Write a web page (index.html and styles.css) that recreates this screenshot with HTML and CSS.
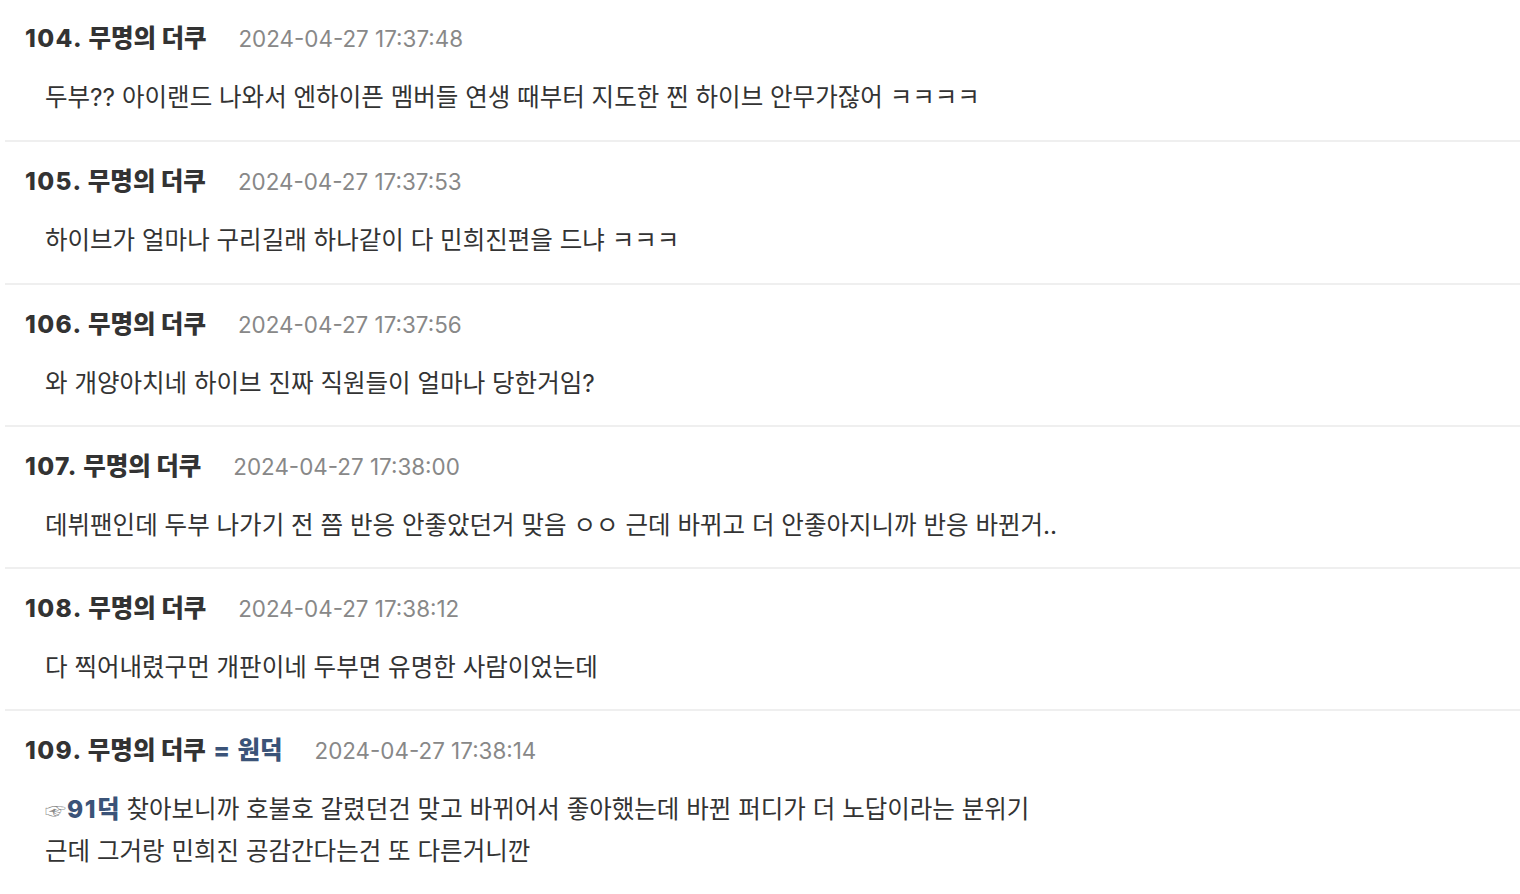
FILE: index.html
```html
<!DOCTYPE html>
<html lang="ko">
<head>
<meta charset="utf-8">
<link rel="stylesheet" href="styles.css">
</head>
<body>
<div class="list">
  <div class="item first">
    <div class="head"><span class="name"><span class="num">104.</span> 무명의 더쿠</span><span class="time">2024-04-27 17:37:48</span></div>
    <div class="body">두부?? 아이랜드 나와서 엔하이픈 멤버들 연생 때부터 지도한 찐 하이브 안무가잖어 ㅋㅋㅋㅋ</div>
  </div>
  <div class="item">
    <div class="head"><span class="name"><span class="num">105.</span> 무명의 더쿠</span><span class="time">2024-04-27 17:37:53</span></div>
    <div class="body">하이브가 얼마나 구리길래 하나같이 다 민희진편을 드냐 ㅋㅋㅋ</div>
  </div>
  <div class="item">
    <div class="head"><span class="name"><span class="num">106.</span> 무명의 더쿠</span><span class="time">2024-04-27 17:37:56</span></div>
    <div class="body">와 개양아치네 하이브 진짜 직원들이 얼마나 당한거임?</div>
  </div>
  <div class="item">
    <div class="head"><span class="name"><span class="num">107.</span> 무명의 더쿠</span><span class="time">2024-04-27 17:38:00</span></div>
    <div class="body">데뷔팬인데 두부 나가기 전 쯤 반응 안좋았던거 맞음 ㅇㅇ 근데 바뀌고 더 안좋아지니까 반응 바뀐거..</div>
  </div>
  <div class="item">
    <div class="head"><span class="name"><span class="num">108.</span> 무명의 더쿠</span><span class="time">2024-04-27 17:38:12</span></div>
    <div class="body">다 찍어내렸구먼 개판이네 두부면 유명한 사람이었는데</div>
  </div>
  <div class="item">
    <div class="head"><span class="name"><span class="num">109.</span> 무명의 더쿠 <span class="op"><span class="eq">=</span> 원덕</span></span><span class="time">2024-04-27 17:38:14</span></div>
    <div class="body"><span class="ref"><span class="hand">☞</span><span class="num">91</span>덕</span> 찾아보니까 호불호 갈렸던건 맞고 바뀌어서 좋아했는데 바뀐 퍼디가 더 노답이라는 분위기<br>근데 그거랑 민희진 공감간다는건 또 다른거니깐</div>
  </div>
</div>
</body>
</html>
```

FILE: styles.css
```css
html, body {
  margin: 0;
  padding: 0;
  background: #ffffff;
}
body {
  font-family: Inter, "Noto Sans CJK KR", "Noto Sans", sans-serif;
  color: #333333;
  overflow: hidden;
}
.list {
  margin-left: 5px;
}
.item {
  border-top: 2px solid #efefef;
  padding: 22px 0 21.25px 0;
}
.item.first {
  border-top: 0;
  padding: 21px 0 22.25px 0;
}
.head {
  display: flex;
  align-items: baseline;
  gap: 32px;
  padding-left: 20px;
  height: 34px;
  line-height: 34px;
}
.name {
  font-weight: 800;
  font-size: 24.5px;
  color: #333333;
}
.name .num {
  letter-spacing: 1.4px;
}
.op {
  color: #3b5378;
}
.eq {
  padding: 0 2px;
}
.time {
  font-size: 22.4px;
  color: #888888;
}
.body {
  margin-top: 21px;
  padding-left: 40px;
  font-size: 24.5px;
  line-height: 42px;
  color: #333333;
}
.ref {
  color: #3b5378;
  font-weight: 800;
}
.ref .num {
  letter-spacing: 1.5px;
}
.hand {
  font-weight: 400;
  color: #8a8a8a;
  font-size: 21px;
  line-height: 1;
  margin-right: 1px;
}
```
